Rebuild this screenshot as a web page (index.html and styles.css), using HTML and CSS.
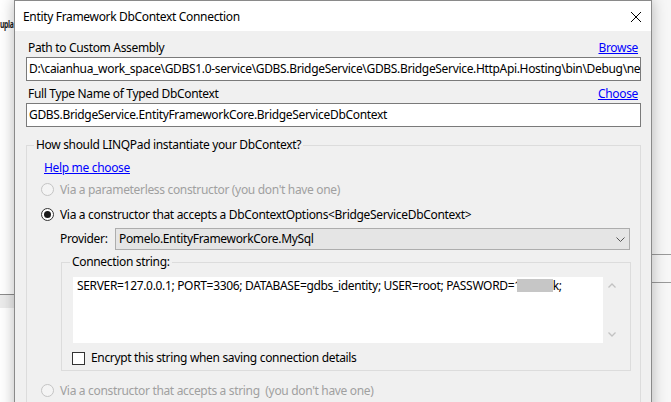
FILE: index.html
```html
<!DOCTYPE html>
<html lang="en">
<head>
<meta charset="utf-8">
<title>Entity Framework DbContext Connection</title>
<link rel="stylesheet" href="styles.css">
</head>
<body>
<div class="backdrop">
  <div class="bd-left">
    <div class="bd-heading">upla</div>
    <div class="bd-rule"></div>
    <div class="bd-band"></div>
  </div>
  <div class="bd-right">
    <div class="bd-line first"></div>
    <div class="bd-line second"></div>
  </div>
</div>

<div class="dialog">
  <div class="titlebar">
    <span class="title">Entity Framework DbContext Connection</span>
    <svg class="close" width="12" height="12" viewBox="0 0 12 12" aria-hidden="true">
      <path d="M1 1 L11 11 M11 1 L1 11" stroke="#000" stroke-width="1" fill="none"/>
    </svg>
  </div>
  <div class="content">
    <div class="label-row">
      <span>Path to Custom Assembly</span>
      <a class="link" href="#">Browse</a>
    </div>
    <div class="textbox">D:\caianhua_work_space\GDBS1.0-service\GDBS.BridgeService\GDBS.BridgeService.HttpApi.Hosting\bin\Debug\net6.0\GDBS.BridgeService.HttpApi.Hosting.dll</div>

    <div class="label-row second">
      <span>Full Type Name of Typed DbContext</span>
      <a class="link" href="#">Choose</a>
    </div>
    <div class="textbox">GDBS.BridgeService.EntityFrameworkCore.BridgeServiceDbContext</div>

    <fieldset class="group">
      <legend>How should LINQPad instantiate your DbContext?</legend>
      <a class="link help" href="#">Help me choose</a>

      <div class="radio-row disabled first">
        <span class="radio"></span>
        <span>Via a parameterless constructor (you don't have one)</span>
      </div>
      <div class="radio-row">
        <span class="radio checked"></span>
        <span>Via a constructor that accepts a DbContextOptions&lt;BridgeServiceDbContext&gt;</span>
      </div>

      <div class="provider-row">
        <span class="provider-label">Provider:</span>
        <div class="combo">
          <span>Pomelo.EntityFrameworkCore.MySql</span>
          <svg class="chev" width="9" height="5" viewBox="0 0 9 5" aria-hidden="true">
            <path d="M0.5 0.5 L4.5 4.5 L8.5 0.5" stroke="#555" stroke-width="1" fill="none"/>
          </svg>
        </div>
      </div>

      <fieldset class="group inner">
        <legend>Connection string:</legend>
        <div class="memo">
          <div class="memo-text">SERVER=127.0.0.1; PORT=3306; DATABASE=gdbs_identity; USER=root; PASSWORD=1<span class="mask"></span>k;</div>
          <div class="scrollbar">
            <svg width="8" height="5" viewBox="0 0 8 5" aria-hidden="true">
              <path d="M0.5 4.5 L4 1 L7.5 4.5" stroke="#c2c2c2" stroke-width="1.3" fill="none"/>
            </svg>
            <svg width="8" height="5" viewBox="0 0 8 5" aria-hidden="true">
              <path d="M0.5 0.5 L4 4 L7.5 0.5" stroke="#c2c2c2" stroke-width="1.3" fill="none"/>
            </svg>
          </div>
        </div>
        <div class="check-row">
          <span class="checkbox"></span>
          <span>Encrypt this string when saving connection details</span>
        </div>
      </fieldset>

      <div class="radio-row disabled last">
        <span class="radio"></span>
        <span>Via a constructor that accepts a string&nbsp; (you don't have one)</span>
      </div>
    </fieldset>
  </div>
</div>
</body>
</html>
```

FILE: styles.css
```css
* {
  box-sizing: border-box;
}

html, body {
  margin: 0;
  padding: 0;
}

body {
  width: 671px;
  height: 402px;
  overflow: hidden;
  position: relative;
  background: #ffffff;
  font-family: "Noto Sans", "Open Sans", sans-serif;
  font-size: 12px;
  line-height: 16px;
  letter-spacing: -0.33px;
  color: #000000;
}

/* ---------- backdrop window ---------- */
.backdrop {
  display: flex;
  justify-content: space-between;
  height: 402px;
}

.bd-left {
  width: 40px;
  display: flex;
  flex-direction: column;
}

.bd-heading {
  margin-top: 16px;
  font-weight: 700;
  font-size: 11px;
  letter-spacing: -0.5px;
  line-height: 16px;
  color: #1a1a1a;
  white-space: nowrap;
  transform: scaleX(0.62);
  transform-origin: left center;
}

.bd-rule {
  margin-top: 262px;
  height: 1px;
  background: #8c8c8c;
}

.bd-band {
  height: 13px;
  background: #ececec;
}

.bd-right {
  width: 20px;
  display: flex;
  flex-direction: column;
  background: #f7f7f7;
}

.bd-line {
  height: 1px;
  background: #9a9a9a;
}

.bd-line.first {
  margin-top: 254px;
}

.bd-line.second {
  margin-top: 27px;
}

/* ---------- dialog window ---------- */
.dialog {
  position: absolute;
  left: 14px;
  top: 0;
  width: 638px;
  height: 430px;
  border: 1px solid #8a8a8a;
  background: #f0f0f0;
  box-shadow: 0 0 14px rgba(0, 0, 0, 0.28);
}

.titlebar {
  height: 30px;
  background: #ffffff;
  display: flex;
  align-items: center;
  justify-content: space-between;
  padding: 0 9px 0 8px;
}

.title {
  line-height: 30px;
  padding-top: 1px;
}

.close {
  display: block;
  margin-top: 1px;
}

.content {
  padding: 9px 10px 0 11px;
}

.label-row {
  display: flex;
  justify-content: space-between;
  padding: 0 3px 0 2px;
  height: 17px;
}

.label-row.second {
  margin-top: 5px;
}

.link {
  color: #0000ff;
  text-decoration: underline;
}

.textbox {
  height: 24px;
  border: 1px solid #7a7a7a;
  background: #ffffff;
  padding: 0 2px;
  line-height: 22px;
  white-space: nowrap;
  overflow: hidden;
}

/* ---------- group boxes ---------- */
.group {
  margin: 10px 0 0 0;
  padding: 7px 9px 0 14px;
  border: 1px solid #dcdcdc;
  min-width: 0;
}

.group legend {
  margin-left: -7px;
  padding: 0 2px;
  line-height: 16px;
}

.help {
  display: inline-block;
  margin-left: 3px;
  line-height: 16px;
}

.radio-row {
  display: flex;
  align-items: center;
  height: 25px;
}

.radio-row.first {
  margin-top: 1px;
}

.radio-row.last {
  margin-top: 7px;
}

.radio-row.disabled {
  color: #a0a0a0;
}

.radio {
  width: 13px;
  height: 13px;
  border-radius: 50%;
  border: 1px solid #333333;
  background: #ffffff;
  margin-right: 6px;
  flex: none;
  display: flex;
  align-items: center;
  justify-content: center;
}

.radio-row.disabled .radio {
  border-color: #c4c4c4;
  background: #f4f4f4;
}

.radio.checked::after {
  content: "";
  width: 7px;
  height: 7px;
  border-radius: 50%;
  background: #1a1a1a;
}

.provider-row {
  display: flex;
  align-items: center;
  margin: 1px 1px 0 19px;
}

.provider-label {
  width: 55px;
  flex: none;
}

.combo {
  flex: 1;
  height: 22px;
  border: 1px solid #adadad;
  background: #e5e5e5;
  display: flex;
  align-items: center;
  justify-content: space-between;
  padding: 0 4px 0 3px;
}

.chev {
  display: block;
}

/* inner group */
.group.inner {
  margin: 4px 0 0 20px;
  padding: 7px 10px 4px 11px;
}

.group.inner legend {
  margin-left: -3px;
}

.memo {
  display: flex;
  height: 66px;
}

.memo-text {
  flex: 1;
  background: #ffffff;
  padding: 1px 4px 0 4px;
  white-space: nowrap;
  overflow: hidden;
}

.mask {
  display: inline-block;
  width: 36px;
  height: 13px;
  margin-left: -4px;
  vertical-align: -2px;
  background: #c6c6c6;
}

.scrollbar {
  width: 17px;
  display: flex;
  flex-direction: column;
  align-items: center;
  justify-content: space-between;
  padding: 6px 0 6px 0;
}

.scrollbar svg {
  display: block;
}

.check-row {
  display: flex;
  align-items: center;
  height: 16px;
  margin: 7px 0 0 -1px;
}

.checkbox {
  width: 13px;
  height: 13px;
  border: 1px solid #333333;
  background: #ffffff;
  margin-right: 6px;
  flex: none;
}
```
